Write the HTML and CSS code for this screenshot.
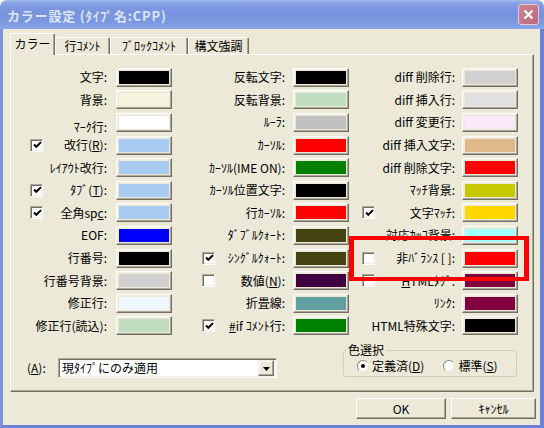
FILE: index.html
```html
<!DOCTYPE html>
<html lang="ja">
<head>
<meta charset="utf-8">
<title>カラー設定</title>
<link rel="stylesheet" href="styles.css">
</head>
<body>
<div class="window">
  <div class="titlebar">
    <span class="title">カラー設定 (ﾀｲﾌﾟ名:CPP)</span>
    <span class="close"><svg width="11" height="11" viewBox="0 0 11 11"><path d="M1.5 1.5 L9.5 9.5 M9.5 1.5 L1.5 9.5" stroke="#fff" stroke-width="2.2" fill="none"/></svg></span>
  </div>
  <div class="client">
    <div class="tabs">
      <div class="tab active t1">カラー</div>
      <div class="tab t2">行ｺﾒﾝﾄ</div>
      <div class="tab t3">ﾌﾞﾛｯｸｺﾒﾝﾄ</div>
      <div class="tab t4">構文強調</div>
    </div>
    <div class="panel">
      <div class="cols">
        <div class="col c1">
          <div class="row"><span class="lbl">文字:</span><span class="sw"><i style="background:#000000"></i></span></div>
          <div class="row"><span class="lbl">背景:</span><span class="sw"><i style="background:#F5F5DF"></i></span></div>
          <div class="row"><span class="lbl low">ﾏｰｸ行:</span><span class="sw"><i style="background:#FFFFFF"></i></span></div>
          <div class="row"><span class="cb"><svg width="9" height="9" viewBox="0 0 9 9"><path d="M1 3.5 L3.3 5.8 L8 1.1" stroke="#000" stroke-width="2" fill="none"/></svg></span><span class="lbl">改行(<u>R</u>):</span><span class="sw"><i style="background:#A6CAF0"></i></span></div>
          <div class="row"><span class="lbl">ﾚｲｱｳﾄ改行:</span><span class="sw"><i style="background:#A6CAF0"></i></span></div>
          <div class="row"><span class="cb"><svg width="9" height="9" viewBox="0 0 9 9"><path d="M1 3.5 L3.3 5.8 L8 1.1" stroke="#000" stroke-width="2" fill="none"/></svg></span><span class="lbl">ﾀﾌﾞ(<u>T</u>):</span><span class="sw"><i style="background:#A6CAF0"></i></span></div>
          <div class="row"><span class="cb"><svg width="9" height="9" viewBox="0 0 9 9"><path d="M1 3.5 L3.3 5.8 L8 1.1" stroke="#000" stroke-width="2" fill="none"/></svg></span><span class="lbl">全角sp<u>c</u>:</span><span class="sw"><i style="background:#A6CAF0"></i></span></div>
          <div class="row"><span class="lbl">EOF:</span><span class="sw"><i style="background:#0000FF"></i></span></div>
          <div class="row"><span class="lbl">行番号:</span><span class="sw"><i style="background:#000000"></i></span></div>
          <div class="row"><span class="lbl">行番号背景:</span><span class="sw"><i style="background:#D0D0D0"></i></span></div>
          <div class="row"><span class="lbl">修正行:</span><span class="sw"><i style="background:#F0F8FF"></i></span></div>
          <div class="row"><span class="lbl">修正行(読込):</span><span class="sw"><i style="background:#C0DCC0"></i></span></div>
        </div>
        <div class="col c2">
          <div class="row"><span class="lbl">反転文字:</span><span class="sw"><i style="background:#000000"></i></span></div>
          <div class="row"><span class="lbl">反転背景:</span><span class="sw"><i style="background:#C0DCC0"></i></span></div>
          <div class="row"><span class="lbl">ﾙｰﾗ:</span><span class="sw"><i style="background:#C0C0C0"></i></span></div>
          <div class="row"><span class="lbl">ｶｰｿﾙ:</span><span class="sw"><i style="background:#FF0000"></i></span></div>
          <div class="row"><span class="lbl">ｶｰｿﾙ(IME ON):</span><span class="sw"><i style="background:#008000"></i></span></div>
          <div class="row"><span class="lbl">ｶｰｿﾙ位置文字:</span><span class="sw"><i style="background:#000000"></i></span></div>
          <div class="row"><span class="lbl">行ｶｰｿﾙ:</span><span class="sw"><i style="background:#FF0000"></i></span></div>
          <div class="row"><span class="lbl">ﾀﾞﾌﾞﾙｸｫｰﾄ:</span><span class="sw"><i style="background:#444411"></i></span></div>
          <div class="row"><span class="cb"><svg width="9" height="9" viewBox="0 0 9 9"><path d="M1 3.5 L3.3 5.8 L8 1.1" stroke="#000" stroke-width="2" fill="none"/></svg></span><span class="lbl">ｼﾝｸﾞﾙｸｫｰﾄ:</span><span class="sw"><i style="background:#444411"></i></span></div>
          <div class="row"><span class="cb"></span><span class="lbl">数値(<u>N</u>):</span><span class="sw"><i style="background:#400040"></i></span></div>
          <div class="row"><span class="lbl">折畳線:</span><span class="sw"><i style="background:#60A0A0"></i></span></div>
          <div class="row"><span class="cb"><svg width="9" height="9" viewBox="0 0 9 9"><path d="M1 3.5 L3.3 5.8 L8 1.1" stroke="#000" stroke-width="2" fill="none"/></svg></span><span class="lbl"><u>#</u>if ｺﾒﾝﾄ行:</span><span class="sw"><i style="background:#008000"></i></span></div>
        </div>
        <div class="col c3">
          <div class="row"><span class="lbl">diff 削除行:</span><span class="sw"><i style="background:#D0D0D0"></i></span></div>
          <div class="row"><span class="lbl">diff 挿入行:</span><span class="sw"><i style="background:#E0E0E0"></i></span></div>
          <div class="row"><span class="lbl">diff 変更行:</span><span class="sw"><i style="background:#F8E8F8"></i></span></div>
          <div class="row"><span class="lbl">diff 挿入文字:</span><span class="sw"><i style="background:#DFB98A"></i></span></div>
          <div class="row"><span class="lbl">diff 削除文字:</span><span class="sw"><i style="background:#FF0000"></i></span></div>
          <div class="row"><span class="lbl">ﾏｯﾁ背景:</span><span class="sw"><i style="background:#C8C800"></i></span></div>
          <div class="row"><span class="cb"><svg width="9" height="9" viewBox="0 0 9 9"><path d="M1 3.5 L3.3 5.8 L8 1.1" stroke="#000" stroke-width="2" fill="none"/></svg></span><span class="lbl">文字ﾏｯﾁ:</span><span class="sw"><i style="background:#FFD700"></i></span></div>
          <div class="row"><span class="lbl">対応ｶｯｺ背景:</span><span class="sw"><i style="background:#A0FFFF"></i></span></div>
          <div class="row"><span class="cb"></span><span class="lbl">非ﾊﾞﾗﾝｽ [ ]:</span><span class="sw"><i style="background:#FF0000"></i></span></div>
          <div class="row"><span class="cb"></span><span class="lbl"><u>H</u>TMLﾀｸﾞ:</span><span class="sw"><i style="background:#800040"></i></span></div>
          <div class="row"><span class="lbl">ﾘﾝｸ:</span><span class="sw"><i style="background:#800040"></i></span></div>
          <div class="row"><span class="lbl">HTML特殊文字:</span><span class="sw"><i style="background:#000000"></i></span></div>
        </div>
      </div>
      <div class="bottom">
        <div class="apply">
          <span class="al">(<u>A</u>):</span>
          <div class="combo"><span class="val">現ﾀｲﾌﾟにのみ適用</span><span class="ddbtn"><svg width="7" height="4" viewBox="0 0 7 4"><path d="M0 0 H7 L3.5 4 Z" fill="#000"/></svg></span></div>
        </div>
        <fieldset class="group">
          <legend>色選択</legend>
          <div class="radios">
            <span class="radio on"><i></i></span><span class="rl">定義済(<u>D</u>)</span>
            <span class="radio r2"></span><span class="rl">標準(<u>S</u>)</span>
          </div>
        </fieldset>
      </div>
    </div>
    <div class="buttons">
      <div class="btn ok">OK</div>
      <div class="btn cancel">ｷｬﾝｾﾙ</div>
    </div>
  </div>
</div>
<div class="highlight"></div>
</body>
</html>
```
FILE: styles.css
```css
html, body { margin: 0; padding: 0; }
body {
  width: 544px; height: 428px; overflow: hidden; position: relative;
  background: #F8F6EC;
  font-family: "Noto Sans CJK JP", "Noto Sans", sans-serif;
  font-size: 12px; line-height: 14px; color: #000;
}
u { text-decoration: underline; text-underline-offset: 1px; }
.window { width: 544px; height: 428px; display: flex; flex-direction: column; }
.titlebar {
  height: 29px; flex: none; box-sizing: border-box;
  display: flex; align-items: center; justify-content: space-between;
  padding: 2px 5px 0 7px;
  border-radius: 7px 7px 0 0;
  background: linear-gradient(#A9BDEE 0px, #8EA8E7 2px, #7E99E1 6px, #7893DE 14px, #7B97E0 22px, #86A3E8 27px, #8AA7EB 29px);
}
.title { color: #DCE6F8; font-weight: bold; font-size: 13px; letter-spacing: 0.8px; }
.close {
  width: 21px; height: 21px; box-sizing: border-box; margin-top: -2px;
  border-radius: 3px; border: 1px solid #E4CCD8;
  background: linear-gradient(135deg, #CF8494, #B86A7C);
  display: flex; align-items: center; justify-content: center;
}
.client {
  flex: 1; background: #ECE9D8;
  border-left: 3px solid #7B93DD; border-right: 4px solid #6A83D6; border-bottom: 3px solid #6A83D6;
  padding: 4px 0 0 7px;
}
.tabs { display: flex; align-items: flex-end; height: 22px; margin-bottom: -1px; position: relative; z-index: 1; }
.tab {
  height: 17px; margin-bottom: 1px; box-sizing: border-box;
  border: 1px solid #fff; border-bottom: none; border-right-color: #716F64;
  box-shadow: inset -1px 0 #ACA899;
  border-radius: 2px 2px 0 0;
  background: #ECE9D8; text-align: center; line-height: 16px;
}
.tab.active { height: 22px; margin-bottom: 0; line-height: 20px; }
.t1 { width: 45px; }
.t2 { width: 55px; }
.t3 { width: 78px; }
.t4 { width: 61px; }
.panel {
  width: 524px; height: 338px; box-sizing: border-box;
  border: 1px solid; border-color: #fff #716F64 #716F64 #fff;
  box-shadow: inset -1px -1px #ACA899;
  padding-top: 11px;
}
.cols { display: flex; padding-left: 19px; }
.col { display: flex; flex-direction: column; }
.c1 { width: 142px; --g: 9px; }
.c2 { width: 147px; margin-left: 30px; --g: 8px; }
.c3 { width: 156px; margin-left: 13px; --g: 7px; }
.row { height: 22.6px; display: flex; align-items: center; }
.lbl { flex: 1; text-align: right; white-space: nowrap; margin-right: var(--g); }
.lbl.low { line-height: 12px; margin-top: 10px; }
.sw {
  width: 56px; height: 19px; box-sizing: border-box; flex: none;
  border: 1px solid; border-color: #fff #716F64 #716F64 #fff;
  box-shadow: inset -1px -1px #ACA899, inset 1px 1px #F1EFE2;
  background: #ECE9D8; padding: 2px; display: flex;
}
.sw i { flex: 1; }
.cb {
  width: 13px; height: 13px; box-sizing: border-box; flex: none;
  border: 1px solid; border-color: #ACA899 #fff #fff #ACA899;
  box-shadow: inset 1px 1px #716F64, inset -1px -1px #F1EFE2;
  background: #fff; display: flex; align-items: center; justify-content: center;
}
.cb svg { display: block; margin: 1px 0 0 1px; }
.bottom { display: flex; align-items: flex-start; margin-top: 6px; }
.apply { display: flex; align-items: center; margin-top: 15px; padding-left: 16px; }
.al { width: 31px; }
.combo {
  width: 219px; height: 20px; box-sizing: border-box;
  border: 1px solid; border-color: #ACA899 #fff #fff #ACA899;
  box-shadow: inset 1px 1px #716F64, inset -1px -1px #F1EFE2;
  background: #fff; display: flex; align-items: center; padding: 2px;
}
.val { flex: 1; padding-left: 1px; white-space: nowrap; }
.ddbtn {
  width: 16px; height: 16px; box-sizing: border-box; flex: none;
  border: 1px solid; border-color: #F1EFE2 #716F64 #716F64 #F1EFE2;
  box-shadow: inset -1px -1px #ACA899, inset 1px 1px #fff;
  background: #ECE9D8; display: flex; align-items: center; justify-content: center;
}
.ddbtn svg { display: block; margin: 1px 0 0 0; }
.group {
  margin: 0 0 0 66px; width: 174px; height: 34px; box-sizing: border-box;
  border: 1px solid #D0D0BF; border-radius: 3px; padding: 0;
}
.group legend { padding: 0 2px; margin-left: 2px; line-height: 14px; }
.radios { display: flex; align-items: center; height: 18px; padding-left: 13px; }
.radio {
  width: 12px; height: 12px; box-sizing: border-box; border-radius: 50%; flex: none;
  border: 1px solid; border-color: #8D8B7E #E8E6DA #E8E6DA #8D8B7E;
  background: #fff; display: flex; align-items: center; justify-content: center;
}
.radio i { width: 4px; height: 4px; border-radius: 50%; background: #000; }
.rl { margin-left: 3px; white-space: nowrap; }
.r2 { margin-left: 19px; }
.buttons { display: flex; justify-content: flex-end; gap: 5px; margin-top: 6px; padding-right: 4px; }
.btn {
  height: 21px; box-sizing: border-box;
  border: 1px solid; border-color: #fff #716F64 #716F64 #fff;
  box-shadow: inset -1px -1px #ACA899;
  display: flex; align-items: center; justify-content: center;
}
.ok { width: 90px; }
.cancel { width: 85px; }
.highlight {
  position: absolute; left: 349px; top: 236px; width: 180px; height: 45px;
  box-sizing: border-box; border-style: solid; border-color: #FF0000; border-width: 4px 5px;
}
```
